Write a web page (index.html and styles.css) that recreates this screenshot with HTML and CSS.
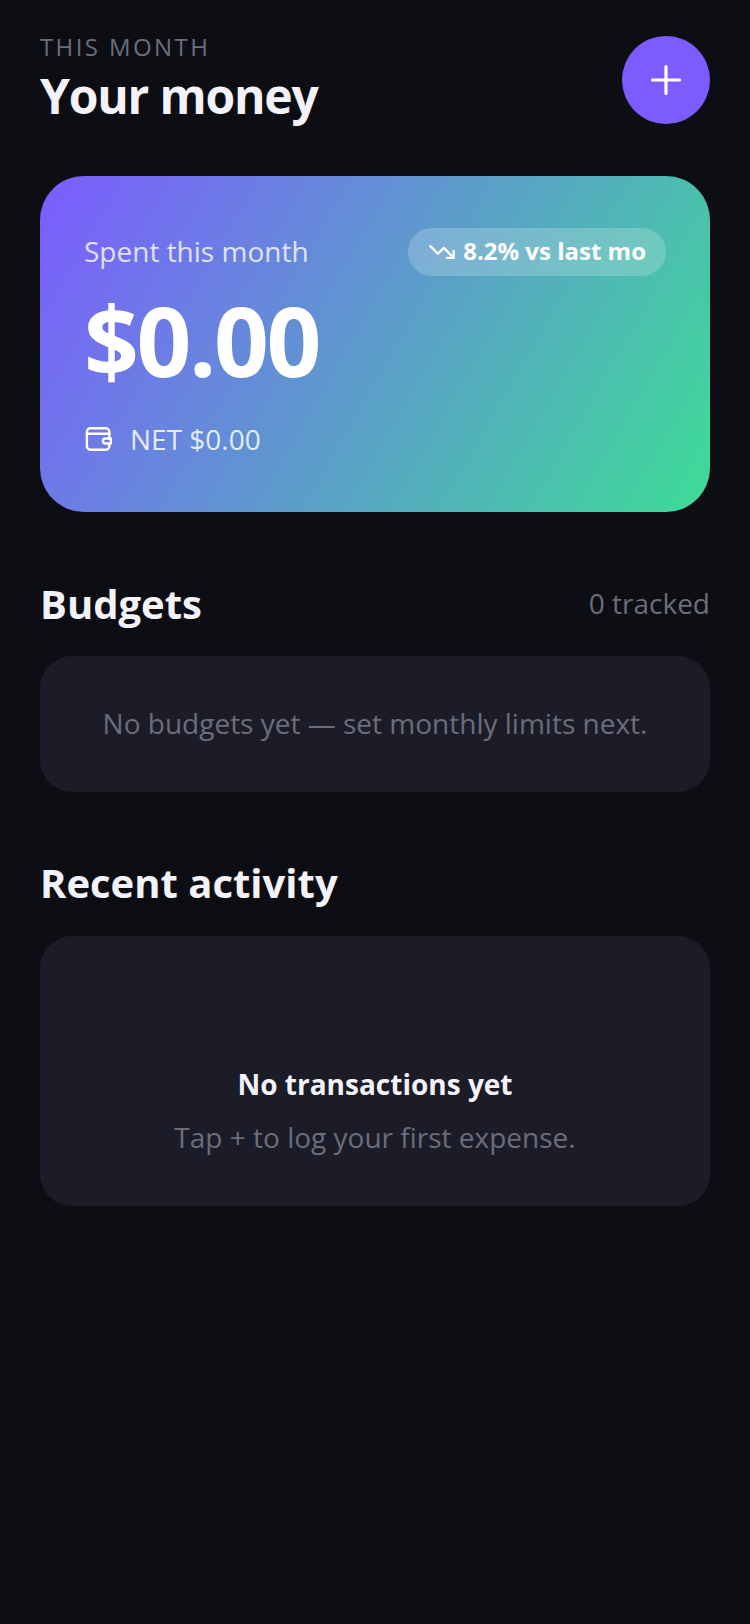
FILE: index.html
```html
<!DOCTYPE html>
<html lang="en">
<head>
<meta charset="utf-8">
<title>Your money</title>
<link rel="stylesheet" href="styles.css">
</head>
<body>
<main class="screen">
  <header class="top">
    <div class="top-text">
      <div class="eyebrow">THIS MONTH</div>
      <h1 class="title">Your money</h1>
    </div>
    <button class="add" aria-label="Add">
      <svg width="32" height="32" viewBox="0 0 32 32" fill="none" stroke="#fff" stroke-width="3.2" stroke-linecap="round"><path d="M16 2.500v27M2.500 16h27"/></svg>
    </button>
  </header>
  <section class="hero">
    <div class="hero-top">
      <div class="hero-label">Spent this month</div>
      <div class="pill">
        <svg width="28" height="28" viewBox="0 0 24 24" fill="none" stroke="#fff" stroke-width="2" stroke-linecap="round" stroke-linejoin="round"><path d="M22 17 13.500 8.500 8.500 13.500 2 7"/><path d="M16 17h6v-6"/></svg>
        <span class="pill-text">8.2% vs last mo</span>
      </div>
    </div>
    <div class="amount">$0.00</div>
    <div class="net">
      <svg width="28" height="28" viewBox="0 0 28 28" fill="none" stroke="#fff" stroke-width="2.400" stroke-linecap="round" stroke-linejoin="round"><path d="M25.300 13.500V6.700a3.500 3.500 0 0 0-3.500-3.500H6.400a3.500 3.500 0 0 0-3.500 3.500v14.600a3.500 3.500 0 0 0 3.500 3.500h15.400a3.500 3.500 0 0 0 3.500-3.500v-2.800"/><path d="M2.900 8.700H25.300"/><path d="M26.800 13.500H21.500a2.500 2.500 0 0 0 0 5h5.300z"/></svg>
      <span>NET $0.00</span>
    </div>
  </section>
  <section class="sec">
    <div class="sec-head">
      <h2 class="sec-title">Budgets</h2>
      <span class="sec-meta">0 tracked</span>
    </div>
    <div class="panel panel-budget">No budgets yet — set monthly limits next.</div>
  </section>
  <section class="sec sec-recent">
    <div class="sec-head">
      <h2 class="sec-title">Recent activity</h2>
    </div>
    <div class="panel panel-empty">
      <div class="empty-title">No transactions yet</div>
      <div class="empty-sub">Tap + to log your first expense.</div>
    </div>
  </section>
</main>
</body>
</html>
```
FILE: styles.css
```css
* { box-sizing: border-box; }
html, body { margin: 0; padding: 0; }
body {
  background: #0d0e14;
  color: #f2f2f8;
  font-family: "Open Sans", sans-serif;
  width: 750px;
  height: 1624px;
  overflow: hidden;
}
.screen { padding: 31px 40px 0; }
.top { display: flex; justify-content: space-between; align-items: flex-start; }
.eyebrow { font-size: 24px; line-height: 32px; letter-spacing: 2.4px; color: #6b6d7b; }
.title { margin: 1px 0 0; font-size: 48px; line-height: 64px; font-weight: 700; letter-spacing: -1.2px; color: #f2f2f8; }
.add {
  width: 88px; height: 88px; margin-top: 5px; border: 0; padding: 0; border-radius: 50%;
  background: #7c5cff; display: flex; align-items: center; justify-content: center;
}
.hero {
  margin-top: 48px; height: 336px; padding: 52px 44px 0; border-radius: 44px; color: #fff;
  background: linear-gradient(120deg, #7c5cff 0%, #3ddc97 100%);
}
.hero-top { display: flex; justify-content: space-between; align-items: center; height: 48px; }
.hero-label { font-size: 28px; padding-bottom: 2px; color: rgba(255,255,255,.8); }
.pill {
  display: flex; align-items: center; gap: 7px; height: 48px; padding: 0 20px; border-radius: 24px;
  background: rgba(255,255,255,.2); font-size: 24px; font-weight: 700; color: #fff;
}
.pill-text { padding-bottom: 4px; }
.amount { margin-top: 8px; font-size: 96px; line-height: 112px; font-weight: 700; letter-spacing: -2.4px; color: #fff; }
.net { display: flex; align-items: center; gap: 18px; margin-top: 24px; font-size: 28px; color: rgba(255,255,255,.85); }
.sec { margin-top: 63px; }
.sec-recent { margin-top: 62px; }
.sec-head { display: flex; justify-content: space-between; align-items: center; height: 56px; }
.sec-title { margin: 0; font-size: 40px; font-weight: 700; color: #f2f2f8; }
.sec-meta { font-size: 28px; color: #6b6d7b; }
.panel { margin-top: 25px; background: #1b1c27; border-radius: 32px; text-align: center; }
.sec-recent .panel { margin-top: 26px; }
.panel-budget { height: 136px; display: flex; align-items: center; justify-content: center; font-size: 28px; line-height: 36px; padding-bottom: 2px; color: #6b6d7b; }
.panel-empty { height: 270px; padding-top: 129px; }
.empty-title { font-size: 28px; line-height: 38px; font-weight: 700; color: #f2f2f8; }
.empty-sub { margin-top: 15px; font-size: 28px; line-height: 38px; color: #6b6d7b; }
```
